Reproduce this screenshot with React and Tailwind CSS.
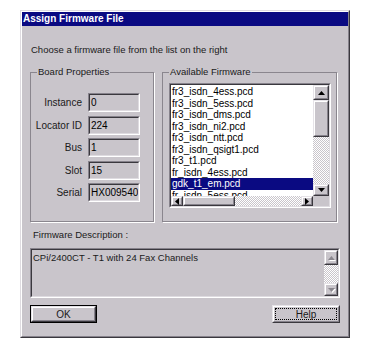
import clsx from 'clsx';

const firmware = [
  'fr3_isdn_4ess.pcd',
  'fr3_isdn_5ess.pcd',
  'fr3_isdn_dms.pcd',
  'fr3_isdn_ni2.pcd',
  'fr3_isdn_ntt.pcd',
  'fr3_isdn_qsigt1.pcd',
  'fr3_t1.pcd',
  'fr_isdn_4ess.pcd',
  'gdk_t1_em.pcd',
  'fr_isdn_5ess.pcd',
];

const props = [
  { label: 'Instance', value: '0' },
  { label: 'Locator ID', value: '224' },
  { label: 'Bus', value: '1' },
  { label: 'Slot', value: '15' },
  { label: 'Serial', value: 'HX009540' },
];

// classic 3D bevels
const Raised = ({ className, innerClassName, children }) => (
  <div className={clsx('border border-t-[#e6e3e8] border-l-[#e6e3e8] border-r-[#3a383e] border-b-[#3a383e] bg-[#c9c5cb]', className)}>
    <div className={clsx('w-full h-full border border-t-white border-l-white border-r-[#86828b] border-b-[#86828b]', innerClassName)}>
      {children}
    </div>
  </div>
);

const Sunken = ({ className, innerClassName, children }) => (
  <div className={clsx('border border-t-[#86828b] border-l-[#86828b] border-r-white border-b-white', className)}>
    <div className={clsx('w-full h-full border border-t-[#3a383e] border-l-[#3a383e] border-r-[#dedbe0] border-b-[#dedbe0]', innerClassName)}>
      {children}
    </div>
  </div>
);

const Arrow = ({ dir, disabled }) => {
  const pts = {
    up: '3.5,0 7,4 0,4',
    down: '0,0 7,0 3.5,4',
    left: '4,0 4,7 0,3.5',
    right: '0,0 0,7 4,3.5',
  }[dir];
  const vertical = dir === 'up' || dir === 'down';
  return (
    <svg width={vertical ? 7 : 4} height={vertical ? 4 : 7} viewBox={vertical ? '0 0 7 4' : '0 0 4 7'} className="block overflow-visible">
      {disabled && <polygon points={pts} fill="#ffffff" transform="translate(1,1)" />}
      <polygon points={pts} fill={disabled ? '#8a868e' : '#000000'} />
    </svg>
  );
};

const ScrollBtn = ({ dir, disabled, className }) => (
  <Raised className={className} innerClassName="flex items-center justify-center">
    <Arrow dir={dir} disabled={disabled} />
  </Raised>
);

const Dither = ({ className }) => (
  <div className={clsx('bg-[repeating-conic-gradient(#ffffff_0%_25%,#c9c5cb_0%_50%)] bg-[length:2px_2px]', className)} />
);

const Group = ({ title, className, children }) => (
  <div className={clsx('relative border border-[#8a868e] shadow-[1px_1px_0_#ffffff]', className)}>
    <span className="absolute -top-[7px] left-[6px] px-[1px] bg-[#c9c5cb] leading-[12px] text-[#1a1a1a]">{title}</span>
    {children}
  </div>
);

export default function App() {
  return (
    <div className="w-[372px] h-[346px] bg-white pl-[20px] pt-[10px] text-[9.5px] text-black" style={{ fontFamily: '"Liberation Sans", Arial, sans-serif' }}>
      <div className="w-[330px] h-[328px] border border-t-[#dedbe0] border-l-[#dedbe0] border-r-[#3a383e] border-b-[#3a383e] bg-[#c9c5cb]">
        <div className="w-full h-full border border-t-white border-l-white border-r-[#86828b] border-b-[#86828b] flex flex-col">
          {/* title bar */}
          <div className="h-[14px] bg-[#0a0a82] flex items-center pl-[1px]">
            <span className="text-white font-bold text-[10px] leading-[14px]">Assign Firmware File</span>
          </div>

          <div className="px-[8px] flex flex-col">
            <div className="mt-[18px] h-[12px] leading-[12px] pl-[1px] text-[#1a1a1a]">Choose a firmware file from the list on the right</div>

            <div className="mt-[16px] flex gap-[8px] h-[150px]">
              {/* board properties */}
              <Group title="Board Properties" className="w-[124px]">
                <div className="mt-[20px] flex flex-col gap-[3.5px]">
                  {props.map((p) => (
                    <div key={p.label} className="flex items-center gap-[6px] h-[19px]">
                      <span className="w-[51px] text-right text-[10px] text-[#1a1a1a]">{p.label}</span>
                      <Sunken className="w-[52px] h-[19px]" innerClassName="pl-[1px] overflow-hidden whitespace-nowrap text-[10px] leading-[15px]">
                        {p.value}
                      </Sunken>
                    </div>
                  ))}
                </div>
              </Group>

              {/* firmware list */}
              <Group title="Available Firmware" className="w-[175px]">
                <Sunken className="mt-[10px] ml-[6px] w-[162px] h-[125px]" innerClassName="flex flex-col bg-white">
                  <div className="flex h-[111px]">
                    <div className="flex-1 overflow-hidden pt-[1px] text-[10px] leading-[11.5px]">
                      {firmware.map((f, i) => (
                        <div key={f} className={clsx('pl-[1px] whitespace-nowrap', i === 8 ? 'bg-[#0a0a82] text-white' : 'text-black')}>
                          {f}
                        </div>
                      ))}
                    </div>
                    <div className="w-[16px] flex flex-col">
                      <ScrollBtn dir="up" className="h-[15px]" />
                      <Raised className="h-[37px]" />
                      <Dither className="flex-1" />
                      <ScrollBtn dir="down" className="h-[12px]" />
                    </div>
                  </div>
                  <div className="flex h-[10px]">
                    <ScrollBtn dir="left" className="w-[12px]" />
                    <Raised className="w-[52px]" />
                    <Dither className="flex-1" />
                    <ScrollBtn dir="right" className="w-[12px]" />
                    <div className="w-[16px] bg-[#c9c5cb]" />
                  </div>
                </Sunken>
              </Group>
            </div>

            <div className="mt-[7px] h-[12px] leading-[12px] pl-[3px] text-[#1a1a1a]">Firmware Description :</div>

            <Sunken className="mt-[7px] h-[50px]" innerClassName="flex">
              <div className="flex-1 pl-[1px] pt-[2px] leading-[12px] text-[#1a1a1a]">CPi/2400CT - T1 with 24 Fax Channels</div>
              <div className="w-[14px] flex flex-col">
                <ScrollBtn dir="up" disabled className="h-[15px]" />
                <Dither className="flex-1" />
                <ScrollBtn dir="down" disabled className="h-[13px]" />
              </div>
            </Sunken>

            <div className="mt-[7px] flex justify-between">
              <div className="border border-black">
                <Raised className="w-[65px] h-[16px]" innerClassName="flex items-center justify-center text-[10px] text-[#1a1a1a]">
                  OK
                </Raised>
              </div>
              <Raised className="w-[68px] h-[18px]" innerClassName="p-[1px]">
                <div className="w-full h-full border border-dotted border-black flex items-center justify-center text-[10px] text-[#1a1a1a]">
                  Help
                </div>
              </Raised>
            </div>
          </div>
        </div>
      </div>
    </div>
  );
}
